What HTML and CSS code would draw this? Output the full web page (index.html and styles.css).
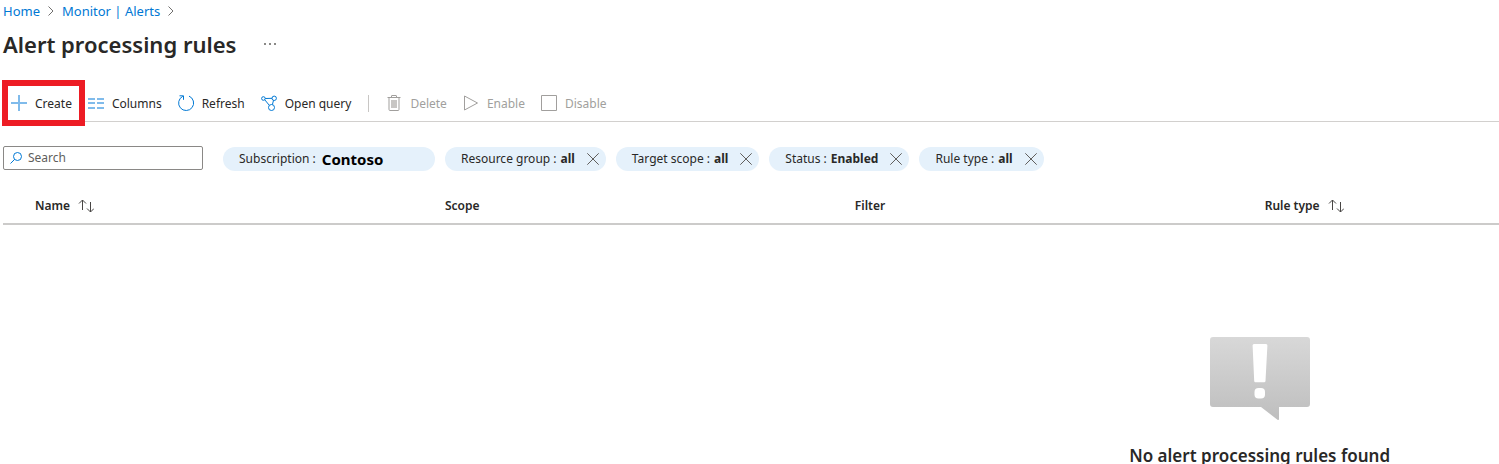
FILE: index.html
```html
<!DOCTYPE html>
<html lang="en">
<head>
<meta charset="utf-8">
<title>Alert processing rules</title>
<link rel="stylesheet" href="styles.css">
</head>
<body>
<header class="header">
  <nav class="crumbs" aria-label="Breadcrumb">
    <a href="#">Home</a>
    <svg class="chevron" viewBox="0 0 6 10"><path d="M.5 .5L5 5L.5 9.5"/></svg>
    <a href="#">Monitor | Alerts</a>
    <svg class="chevron" viewBox="0 0 6 10"><path d="M.5 .5L5 5L.5 9.5"/></svg>
  </nav>
  <div class="title-row">
    <h1 class="title">Alert processing rules</h1>
    <button class="more" type="button" aria-label="More actions">
      <svg width="12" height="2" viewBox="0 0 12 2"><path d="M0 0h2v2H0zM5 0h2v2H5zM10 0h2v2h-2z"/></svg>
    </button>
  </div>
</header>

<div class="toolbar" role="toolbar" aria-label="Alert processing rule actions">
  <button class="tool highlighted" type="button">
    <svg class="icon" viewBox="0 0 16 16"><path class="pale" d="M8 0v16M0 8h16"/></svg>Create</button>
  <button class="tool" type="button">
    <svg class="icon" viewBox="0 0 16 16"><path class="pale" d="M0 4h7M9 4h7M0 8h7M9 8h7M0 13h7M9 13h7"/></svg>Columns</button>
  <button class="tool" type="button">
    <svg class="icon" viewBox="0 0 16 16"><path d="M11 1.100A7.500 7.500 0 1 1 4.800 1.300M1.500 .8h4v4"/></svg>Refresh</button>
  <button class="tool" type="button">
    <svg class="icon" viewBox="0 0 16 16"><circle cx="2.400" cy="3.500" r="1.800"/><circle cx="13.200" cy="3.300" r="2.200"/><circle cx="10.500" cy="12.500" r="3"/><path d="M4.200 3.500L11 3.300M3.700 4.700L8.300 10.300M12.500 5.400L11.400 9.600"/></svg>Open query</button>
  <span class="divider"></span>
  <button class="tool" type="button" disabled>
    <svg class="icon" viewBox="0 0 16 16"><path d="M1.500 2.500h13M5.500 2.500V.8Q5.500 .5 6 .5h4q.5 0 .5 .5v1.500M3 2.500v12q0 1 1 1h8q1 0 1-1v-12"/><path class="slats" d="M5 5h6v8H5z"/></svg>Delete</button>
  <button class="tool" type="button" disabled>
    <svg class="icon" viewBox="0 0 16 16"><path d="M1.500 1L14.500 8L1.500 15Z"/></svg>Enable</button>
  <button class="tool" type="button" disabled>
    <svg class="icon" viewBox="0 0 16 16"><path d="M.5 .5h15v15H.5z"/></svg>Disable</button>
</div>

<div class="filters">
  <label class="search">
    <svg viewBox="0 0 12 12"><circle cx="7.500" cy="4.500" r="4"/><path d="M4.700 7.300L.5 11.500"/></svg>
    <input type="search" placeholder="Search" aria-label="Search">
  </label>
  <button class="pill subscription" type="button">Subscription : <b class="tenant">Contoso</b></button>
  <span class="pill">Resource group : <b>all</b><button class="close" type="button" aria-label="Remove resource group filter"><svg viewBox="0 0 12 12"><path d="M.3 .3L11.700 11.700M11.700 .3L.3 11.700"/></svg></button></span>
  <span class="pill">Target scope : <b>all</b><button class="close" type="button" aria-label="Remove target scope filter"><svg viewBox="0 0 12 12"><path d="M.3 .3L11.700 11.700M11.700 .3L.3 11.700"/></svg></button></span>
  <span class="pill">Status : <b>Enabled</b><button class="close" type="button" aria-label="Remove status filter"><svg viewBox="0 0 12 12"><path d="M.3 .3L11.700 11.700M11.700 .3L.3 11.700"/></svg></button></span>
  <span class="pill">Rule type : <b>all</b><button class="close" type="button" aria-label="Remove rule type filter"><svg viewBox="0 0 12 12"><path d="M.3 .3L11.700 11.700M11.700 .3L.3 11.700"/></svg></button></span>
</div>

<table class="rules">
  <thead>
    <tr>
      <th scope="col"><button class="sort" type="button">Name<svg viewBox="0 0 16 14"><path d="M4.500 11V1M1 4.500L4.500 1L8 4.500M12.500 3v10M9 9.500l3.500 3.500L16 9.500"/></svg></button></th>
      <th scope="col">Scope</th>
      <th scope="col">Filter</th>
      <th scope="col"><button class="sort" type="button">Rule type<svg viewBox="0 0 16 14"><path d="M4.500 11V1M1 4.500L4.500 1L8 4.500M12.500 3v10M9 9.500l3.500 3.500L16 9.500"/></svg></button></th>
    </tr>
  </thead>
</table>

<section class="empty">
  <svg class="empty-icon" viewBox="0 0 100 84">
    <defs><linearGradient id="bubble" x1="0" y1="0" x2="0" y2="1"><stop offset="0" stop-color="#d8d8d8"/><stop offset=".85" stop-color="#c2c2c2"/><stop offset="1" stop-color="#bebebe"/></linearGradient></defs>
    <path fill="url(#bubble)" d="M3 0h94q3 0 3 3v64q0 3-3 3H69v12q0 1.500-1.500 .8L51 70H3q-3 0-3-3V3q0-3 3-3z"/>
    <path fill="#fff" d="M44 7h12q1.500 0 1.400 1.500L55.500 44q-.1 1.200-1.300 1.200h-8.700q-1.200 0-1.300-1.200L42.600 8.500Q42.500 7 44 7z"/>
    <rect fill="#fff" x="44.500" y="51" width="10.500" height="10.500" rx="4"/>
  </svg>
  <h2 class="empty-title">No alert processing rules found</h2>
</section>
</body>
</html>
```
FILE: styles.css
```css
* { box-sizing: border-box; }

body {
  margin: 0;
  padding-left: 3px;
  overflow: hidden;
  background: #fff;
  color: #292827;
  font: 12px/18px "Noto Sans", "Open Sans", sans-serif;
}

button {
  padding: 0;
  border: 0;
  background: none;
  color: inherit;
  font: inherit;
}

svg { flex: none; fill: none; }

.crumbs {
  display: flex;
  align-items: center;
  gap: 8px;
  padding-top: 2px;
  font-size: 13px;
}
.crumbs a { color: #0078d4; text-decoration: none; }
.chevron { width: 6px; height: 10px; stroke: #706f6e; }

.title-row {
  display: flex;
  align-items: center;
  gap: 28px;
  padding-top: 8px;
}
.title { margin: 0; font-size: 22px; line-height: 32px; font-weight: 600; }
.more { display: flex; }
.more svg { fill: #8a8987; }

.toolbar {
  display: flex;
  align-items: center;
  height: 37px;
  margin-top: 25px;
  border-bottom: 1px solid #d2d0ce;
}
.tool {
  display: flex;
  align-items: center;
  gap: 8px;
  height: 34px;
  padding: 2px 8px 0;
}
.tool:disabled { color: #a19f9d; }
.icon { width: 16px; height: 16px; margin-bottom: 2px; stroke: #0078d4; }
.pale { stroke: #80bbeb; stroke-width: 2; }
.tool:disabled .icon { stroke: #a19f9d; }
.tool:disabled .slats { fill: #c8c6c4; stroke: none; }
.highlighted { margin: 0 1px 0 5px; padding: 2px 7px 0 3px; outline: 6px solid #ed1c24; }
.divider { width: 1px; height: 17px; margin: 0 9px; background: #c8c6c4; }

.filters {
  display: flex;
  align-items: flex-start;
  gap: 10px;
  padding-top: 24px;
}
.search {
  display: flex;
  align-items: center;
  gap: 6px;
  width: 200px;
  height: 24px;
  margin-right: 10px;
  padding: 0 6px;
  border: 1px solid #8a8886;
  border-radius: 2px;
}
.search svg { width: 12px; height: 12px; stroke: #0078d4; }
.search input {
  flex: 1;
  min-width: 0;
  padding: 0;
  border: 0;
  outline: 0;
  background: none;
  color: inherit;
  font: inherit;
}
.search input::placeholder { color: #605e5c; opacity: 1; }
.pill {
  display: flex;
  align-items: center;
  gap: 4px;
  height: 24px;
  margin-top: 1px;
  padding: 0 7px 0 16px;
  border-radius: 12px;
  background: #e5f1fb;
}
.subscription { gap: 6px; width: 212px; }
.tenant { color: #000; font-size: 15px; }
.close { display: flex; margin-left: 8px; }
.close svg { width: 12px; height: 12px; stroke: #605e5c; }

.rules {
  width: 100%;
  margin-top: 16px;
  border-collapse: collapse;
  table-layout: fixed;
  border-bottom: 2px solid #cccbca;
}
.rules th {
  width: 27.4%;
  height: 37px;
  padding: 1px 0 0 32px;
  font-weight: 600;
  text-align: left;
}
.rules th:last-child { width: auto; }
.sort { display: flex; align-items: center; gap: 8px; }
.sort svg { width: 16px; height: 14px; stroke: #484644; }

.empty {
  display: flex;
  flex-direction: column;
  align-items: center;
  gap: 22px;
  width: 32%;
  margin-left: auto;
  padding-top: 112px;
}
.empty-icon { width: 100px; height: 84px; }
.empty-title { margin: 0; font-size: 17px; line-height: 26px; font-weight: 600; white-space: nowrap; }
```
